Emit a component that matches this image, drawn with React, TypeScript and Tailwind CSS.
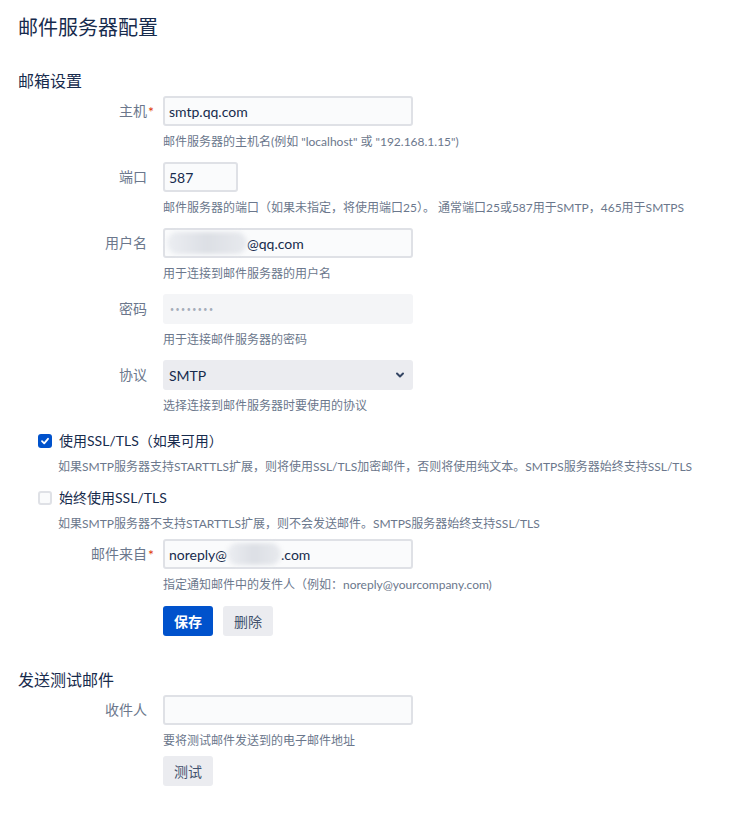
import React from "react";

const font = { fontFamily: 'Lato, "Noto Sans CJK SC", sans-serif' };

function Label({ text, required }: { text: string; required?: boolean }) {
  return (
    <div className="w-[129px] shrink-0 text-right text-[14px] leading-[30px] text-[#6b778c]">
      <span className="relative">
        {text}
        {required && (
          <span className="absolute -right-[7px] -top-[5px] font-normal text-[#de350b]">*</span>
        )}
      </span>
    </div>
  );
}

function Help({ children }: { children: React.ReactNode }) {
  return (
    <div className="mt-[8px] text-[12px] leading-[16px] text-[#6b778c] whitespace-nowrap">
      {children}
    </div>
  );
}

function Blur({ w }: { w: number }) {
  return (
    <span
      className="inline-block h-[22px] align-middle rounded-full bg-gradient-to-r from-[#eceef2] via-[#dcdfe5] to-[#e8eaee] blur-[2px]"
      style={{ width: w }}
    />
  );
}

function Field({
  label,
  required,
  help,
  children,
  className = "",
}: {
  label: string;
  required?: boolean;
  help: React.ReactNode;
  children: React.ReactNode;
  className?: string;
}) {
  return (
    <div className={`flex gap-[16px] ${className}`}>
      <Label text={label} required={required} />
      <div>
        {children}
        <Help>{help}</Help>
      </div>
    </div>
  );
}

const inputCls =
  "flex h-[30px] items-center rounded-[3px] border-2 border-[#dfe1e6] bg-[#fafbfc] px-[4px] text-[14px] text-[#172b4d]";

export default function App() {
  return (
    <div className="min-h-screen bg-white pl-[18px] pb-8 text-[#172b4d]" style={font}>
      <h1 className="pt-[13px] text-[20px] leading-[28px] font-normal">邮件服务器配置</h1>

      <h2 className="mt-[28px] text-[16px] leading-[24px] font-normal">邮箱设置</h2>

      <Field className="mt-[3px]" label="主机" required help={'邮件服务器的主机名(例如 "localhost" 或 "192.168.1.15")'}>
        <div className={`${inputCls} w-[250px]`}>smtp.qq.com</div>
      </Field>

      <Field
        className="mt-[12px]"
        label="端口"
        help="邮件服务器的端口（如果未指定，将使用端口25）。 通常端口25或587用于SMTP，465用于SMTPS"
      >
        <div className={`${inputCls} w-[75px]`}>587</div>
      </Field>

      <Field className="mt-[12px]" label="用户名" help="用于连接到邮件服务器的用户名">
        <div className={`${inputCls} w-[250px] !px-[2px]`}>
          <Blur w={80} />
          <span>@qq.com</span>
        </div>
      </Field>

      <Field className="mt-[12px]" label="密码" help="用于连接邮件服务器的密码">
        <div className="flex h-[30px] w-[250px] items-center rounded-[3px] bg-[#f4f5f7] px-[7px] text-[7px] tracking-[1.5px] text-[#a5adba]">
          ••••••••
        </div>
      </Field>

      <Field className="mt-[12px]" label="协议" help="选择连接到邮件服务器时要使用的协议">
        <div className="flex h-[30px] w-[250px] items-center justify-between rounded-[3px] bg-[#ebecf0] pl-[6px] pr-[8px] text-[14px] text-[#172b4d]">
          <span>SMTP</span>
          <svg width="10" height="10" viewBox="0 0 10 10">
            <path d="M2 3.5 L5 6.5 L8 3.5" fill="none" stroke="#344563" strokeWidth="2" strokeLinecap="round" strokeLinejoin="round" />
          </svg>
        </div>
      </Field>

      <div className="mt-[17px] pl-[20px]">
        <div className="flex items-center gap-[7px] text-[14px] leading-[20px]">
          <span className="flex h-[14px] w-[14px] items-center justify-center rounded-[3px] bg-[#0052cc]">
            <svg width="10" height="10" viewBox="0 0 10 10">
              <path d="M2 5.2 L4.2 7.3 L8 2.8" fill="none" stroke="white" strokeWidth="1.8" strokeLinecap="round" strokeLinejoin="round" />
            </svg>
          </span>
          <span>使用SSL/TLS（如果可用）</span>
        </div>
        <div className="mt-[8px] pl-[20px] text-[12px] leading-[16px] text-[#6b778c]">
          如果SMTP服务器支持STARTTLS扩展，则将使用SSL/TLS加密邮件，否则将使用纯文本。SMTPS服务器始终支持SSL/TLS
        </div>

        <div className="mt-[13px] flex items-center gap-[7px] text-[14px] leading-[20px]">
          <span className="h-[14px] w-[14px] rounded-[3px] border-2 border-[#dfe1e6] bg-[#fafbfc]" />
          <span>始终使用SSL/TLS</span>
        </div>
        <div className="mt-[8px] pl-[20px] text-[12px] leading-[16px] text-[#6b778c]">
          如果SMTP服务器不支持STARTTLS扩展，则不会发送邮件。SMTPS服务器始终支持SSL/TLS
        </div>
      </div>

      <Field
        className="mt-[7px]"
        label="邮件来自"
        required
        help="指定通知邮件中的发件人（例如：noreply@yourcompany.com)"
      >
        <div className={`${inputCls} w-[250px]`}>
          <span>noreply@</span>
          <Blur w={54} />
          <span>.com</span>
        </div>
      </Field>

      <div className="mt-[13px] flex gap-[10px] pl-[145px]">
        <button className="h-[30px] w-[50px] rounded-[3px] bg-[#0052cc] text-[14px] font-bold text-white">
          保存
        </button>
        <button className="h-[30px] w-[50px] rounded-[3px] bg-[#ebecf0] text-[14px] text-[#42526e]">
          删除
        </button>
      </div>

      <h2 className="mt-[32px] text-[16px] leading-[24px] font-normal">发送测试邮件</h2>

      <Field className="mt-[3px]" label="收件人" help="要将测试邮件发送到的电子邮件地址">
        <div className={`${inputCls} w-[250px]`} />
      </Field>

      <div className="mt-[7px] pl-[145px]">
        <button className="h-[30px] w-[50px] rounded-[3px] bg-[#ebecf0] text-[14px] text-[#42526e]">
          测试
        </button>
      </div>
    </div>
  );
}
